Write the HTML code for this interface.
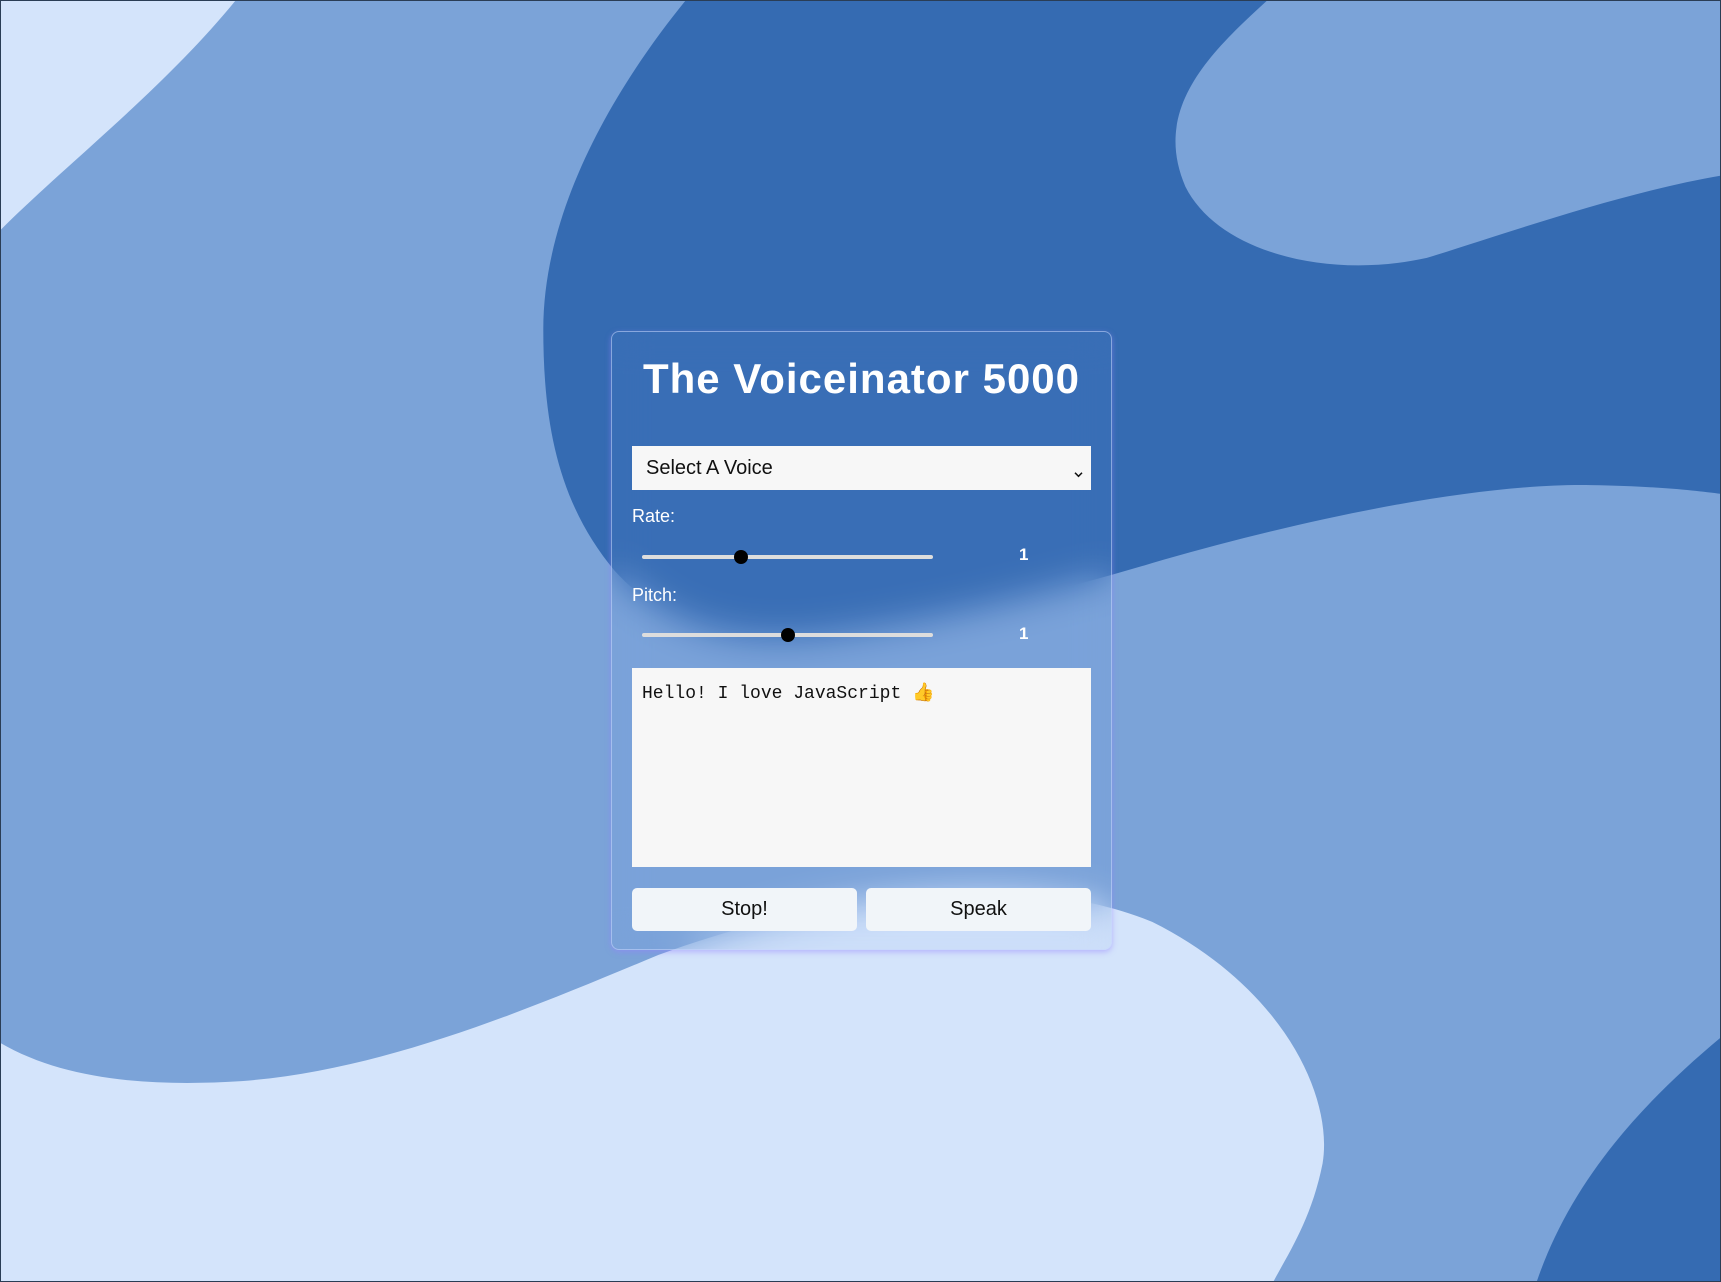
<!DOCTYPE html>
<html><head><meta charset="utf-8">
<style>
html,body{margin:0;padding:0;}
body{width:1721px;height:1282px;position:relative;overflow:hidden;background:#d4e4fb;font-family:"Liberation Sans",sans-serif;}
#bg{position:absolute;left:0;top:0;width:1721px;height:1282px;}
#frame{position:absolute;left:0;top:0;width:1719px;height:1280px;border:1px solid #2a3d55;}
.card{position:absolute;left:611px;top:331px;width:501px;height:619px;border:1px solid rgba(200,215,255,0.55);border-radius:8px;background:rgba(120,150,230,0.08);backdrop-filter:blur(18px);-webkit-backdrop-filter:blur(18px);box-shadow:0 2px 6px rgba(150,130,255,0.5);box-sizing:border-box;}
h1{position:absolute;left:0;width:100%;top:23px;margin:0;text-align:center;color:#fff;font-size:42px;font-weight:bold;letter-spacing:1px;}
.sel{position:absolute;left:20px;top:114px;width:459px;height:44px;background:#f7f7f7;font-size:20px;color:#111;box-sizing:border-box;padding:11px 14px;}
.sel .arr{position:absolute;right:8px;top:15px;}
.lbl{position:absolute;left:20px;color:#fff;font-size:18px;}
.track{position:absolute;left:30px;width:291px;height:4px;background:#ddd;border-radius:2px;}
.thumb{position:absolute;top:-5px;width:14px;height:14px;border-radius:50%;background:#000;margin-left:-7px;}
.val{position:absolute;left:407px;color:#fff;font-size:17px;font-weight:bold;}
.ta{position:absolute;left:20px;top:336px;width:459px;height:199px;background:#f7f7f7;box-sizing:border-box;padding:14px 10px;font-family:"Liberation Mono",monospace;font-size:18px;color:#111;}
.btn{position:absolute;top:556px;width:225px;height:43px;background:#f1f5f9;border-radius:5px;text-align:center;line-height:43px;font-size:20px;color:#111;}
</style></head><body>
<svg id="bg" viewBox="0 0 1568 1168" preserveAspectRatio="none">
<rect width="1568" height="1168" fill="#d4e4fb"/>
<path d="M215,0 C150,80 60,150 0,210 L0,950 C60,985 140,990 220,985 C350,975 480,920 600,870 C750,815 930,790 1050,840 C1170,900 1215,1000 1205,1060 C1195,1110 1175,1140 1160,1168 L1568,1168 L1568,0 Z" fill="#7ba3d8"/>
<path d="M625,0 C560,80 495,190 495,300 C495,390 510,460 560,520 C610,575 680,590 760,578 C860,565 960,540 1060,510 C1200,470 1350,440 1450,442 C1510,443 1545,447 1568,450 L1568,160 C1480,175 1380,210 1300,235 C1210,255 1110,230 1080,170 C1050,100 1100,50 1155,0 Z" fill="#356bb2"/>
<path d="M1400,1168 C1430,1080 1490,1010 1568,945 L1568,1168 Z" fill="#356bb2"/>
</svg>
<div id="frame"></div>
<div class="card">
<h1>The Voiceinator 5000</h1>
<div class="sel">Select A Voice<span class="arr"><svg width="9" height="7" viewBox="0 0 10 8"><path d="M1,2 L5,6 L9,2" fill="none" stroke="#111" stroke-width="1.8"/></svg></span></div>
<div class="lbl" style="top:174px">Rate:</div>
<div class="track" style="top:223px"><div class="thumb" style="left:99px"></div></div>
<div class="val" style="top:213px">1</div>
<div class="lbl" style="top:253px">Pitch:</div>
<div class="track" style="top:301px"><div class="thumb" style="left:146px"></div></div>
<div class="val" style="top:292px">1</div>
<div class="ta">Hello! I love JavaScript 👍</div>
<div class="btn" style="left:20px">Stop!</div>
<div class="btn" style="left:254px">Speak</div>
</div>
</body></html>
